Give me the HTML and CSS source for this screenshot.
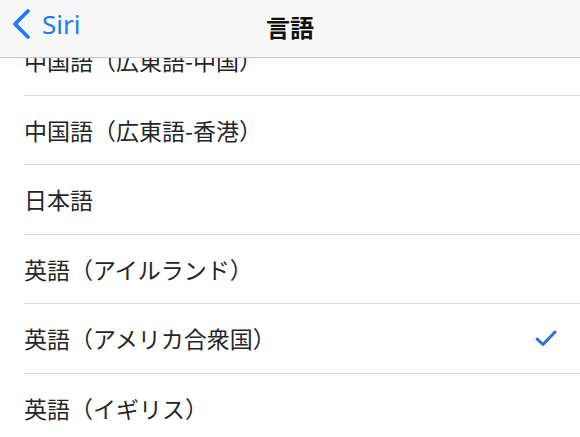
FILE: index.html
```html
<!DOCTYPE html>
<html lang="ja">
<head>
    <meta charset="UTF-8">
    <meta name="viewport" content="width=device-width, initial-scale=1.0">
    <link rel="stylesheet" href="styles.css">
    <title>言語</title>
</head>
<body>
    <header class="nav-bar">
        <a class="back-link" href="#">
            <svg class="back-chevron" width="24" height="32" viewBox="0 0 24 32">
                <path d="M19 3 L6 16 L19 29" fill="none" stroke="currentColor" stroke-width="3.8" stroke-linecap="round" stroke-linejoin="round"/>
            </svg>
            <span>Siri</span>
        </a>
        <h1 class="nav-title">言語</h1>
    </header>

    <ul class="lang-list">
        <li class="lang-row">中国語（広東語-中国）</li>
        <li class="lang-row">中国語（広東語-香港）</li>
        <li class="lang-row">日本語</li>
        <li class="lang-row">英語（アイルランド）</li>
        <li class="lang-row selected">
            英語（アメリカ合衆国）
            <svg class="check" width="24" height="20" viewBox="0 0 24 20">
                <path d="M3 11 L9 16.5 L21 4" fill="none" stroke="currentColor" stroke-width="3" stroke-linecap="round" stroke-linejoin="round"/>
            </svg>
        </li>
        <li class="lang-row">英語（イギリス）</li>
    </ul>
</body>
</html>
```

FILE: styles.css
```css
body {
    margin: 0;
    background-color: white;
    font-family: "Noto Sans CJK JP", "Noto Sans", sans-serif;
    color: #262626;
    overflow: hidden;
}

.nav-bar {
    position: fixed;
    top: 0;
    left: 0;
    right: 0;
    height: 57px;
    background-color: #f7f7f7;
    border-bottom: 1px solid #c9c9c9;
    display: flex;
    align-items: center;
    justify-content: center;
    z-index: 2;
}

.back-link {
    position: absolute;
    left: 9px;
    top: 8px;
    display: flex;
    align-items: center;
    gap: 9px;
    color: #1b7cf0;
    text-decoration: none;
    font-family: "Noto Sans", sans-serif;
    font-size: 26px;
}

.back-chevron {
    display: block;
}

.back-link span {
    line-height: 32px;
}

.nav-title {
    margin: 0 0 5px 0;
    font-size: 24px;
    font-weight: bold;
    color: #111;
}

.lang-list {
    list-style: none;
    margin: 0;
    padding: 26px 0 0 24px;
}

.lang-row {
    height: 68.5px;
    display: flex;
    align-items: center;
    justify-content: space-between;
    border-bottom: 1px solid #dcdcdc;
    font-size: 23px;
    padding-right: 22px;
}

.check {
    color: #2c70d8;
}
```
